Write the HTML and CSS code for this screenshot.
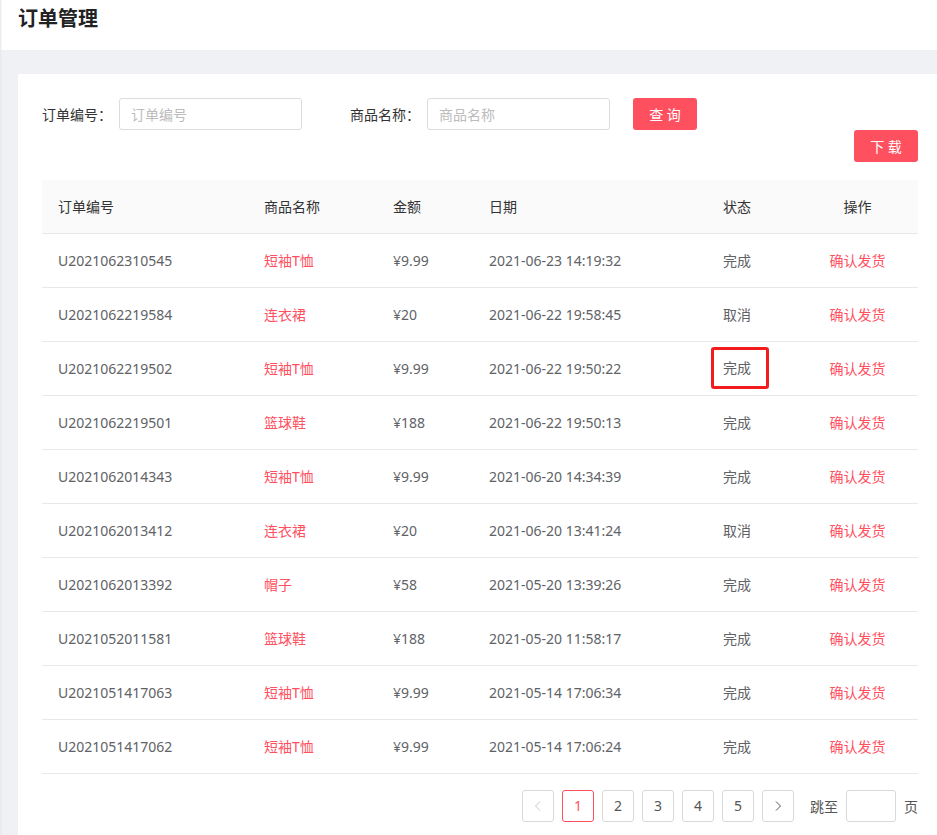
FILE: index.html
```html
<!DOCTYPE html>
<html lang="zh-CN">
<head>
  <meta charset="UTF-8">
  <meta name="viewport" content="width=device-width, initial-scale=1">
  <title>订单管理</title>
  <link rel="stylesheet" href="styles.css">
</head>
<body>

  <header class="page-header">
    <h1 class="page-title">订单管理</h1>
  </header>

  <main class="page-body">
    <section class="card">
      <form class="filter-bar">
        <label class="filter-item">
          <span class="filter-label">订单编号：</span>
          <input class="text-input" type="text" placeholder="订单编号">
        </label>
        <label class="filter-item">
          <span class="filter-label">商品名称：</span>
          <input class="text-input" type="text" placeholder="商品名称">
        </label>
        <button class="btn" type="button">查 询</button>
      </form>

      <div class="toolbar">
        <button class="btn" type="button">下 载</button>
      </div>

      <table class="order-table">
        <colgroup>
          <col class="col-no">
          <col class="col-name">
          <col class="col-price">
          <col class="col-date">
          <col class="col-status">
          <col class="col-action">
        </colgroup>
        <thead>
          <tr>
            <th>订单编号</th>
            <th>商品名称</th>
            <th>金额</th>
            <th>日期</th>
            <th class="center">状态</th>
            <th class="center">操作</th>
          </tr>
        </thead>
        <tbody>
          <tr>
            <td>U2021062310545</td><td class="red">短袖T恤</td><td>¥9.99</td>
            <td>2021-06-23 14:19:32</td><td class="center">完成</td><td class="center red">确认发货</td>
          </tr>
          <tr>
            <td>U2021062219584</td><td class="red">连衣裙</td><td>¥20</td>
            <td>2021-06-22 19:58:45</td><td class="center">取消</td><td class="center red">确认发货</td>
          </tr>
          <tr>
            <td>U2021062219502</td><td class="red">短袖T恤</td><td>¥9.99</td>
            <td>2021-06-22 19:50:22</td><td class="center"><span class="marked">完成</span></td><td class="center red">确认发货</td>
          </tr>
          <tr>
            <td>U2021062219501</td><td class="red">篮球鞋</td><td>¥188</td>
            <td>2021-06-22 19:50:13</td><td class="center">完成</td><td class="center red">确认发货</td>
          </tr>
          <tr>
            <td>U2021062014343</td><td class="red">短袖T恤</td><td>¥9.99</td>
            <td>2021-06-20 14:34:39</td><td class="center">完成</td><td class="center red">确认发货</td>
          </tr>
          <tr>
            <td>U2021062013412</td><td class="red">连衣裙</td><td>¥20</td>
            <td>2021-06-20 13:41:24</td><td class="center">取消</td><td class="center red">确认发货</td>
          </tr>
          <tr>
            <td>U2021062013392</td><td class="red">帽子</td><td>¥58</td>
            <td>2021-05-20 13:39:26</td><td class="center">完成</td><td class="center red">确认发货</td>
          </tr>
          <tr>
            <td>U2021052011581</td><td class="red">篮球鞋</td><td>¥188</td>
            <td>2021-05-20 11:58:17</td><td class="center">完成</td><td class="center red">确认发货</td>
          </tr>
          <tr>
            <td>U2021051417063</td><td class="red">短袖T恤</td><td>¥9.99</td>
            <td>2021-05-14 17:06:34</td><td class="center">完成</td><td class="center red">确认发货</td>
          </tr>
          <tr>
            <td>U2021051417062</td><td class="red">短袖T恤</td><td>¥9.99</td>
            <td>2021-05-14 17:06:24</td><td class="center">完成</td><td class="center red">确认发货</td>
          </tr>
        </tbody>
      </table>

      <nav class="pager">
        <button class="page-btn disabled" type="button">
          <svg width="12" height="12" viewBox="0 0 12 12"><path d="M8 1.5 3.5 6 8 10.5" fill="none" stroke="currentColor" stroke-width="1"/></svg>
        </button>
        <button class="page-btn active" type="button">1</button>
        <button class="page-btn" type="button">2</button>
        <button class="page-btn" type="button">3</button>
        <button class="page-btn" type="button">4</button>
        <button class="page-btn" type="button">5</button>
        <button class="page-btn" type="button">
          <svg width="12" height="12" viewBox="0 0 12 12"><path d="M4 1.5 8.5 6 4 10.5" fill="none" stroke="currentColor" stroke-width="1"/></svg>
        </button>
        <span class="jump-text">跳至</span>
        <input class="jump-input" type="text">
        <span class="jump-unit">页</span>
      </nav>
    </section>
  </main>

</body>
</html>
```

FILE: styles.css
```css
* {
  margin: 0;
  padding: 0;
  box-sizing: border-box;
}
body {
  background: #f0f1f5;
  color: #606266;
  font-family: "Noto Sans", "Noto Sans CJK SC", sans-serif;
  font-size: 14px;
  overflow: hidden;
}

.page-header {
  height: 50px;
  background: #fff;
  padding-left: 18px;
  display: flex;
  align-items: center;
  box-shadow: inset 2px 0 2px -1px #e6e6e6;
}
.page-title {
  font-size: 20px;
  font-weight: bold;
  color: #222;
  line-height: 1;
  margin-top: -12px;
}

.page-body {
  padding: 24px 0 0 18px;
  box-shadow: inset 2px 0 2px -1px #e6e6ea;
}
.card {
  background: #fff;
  padding: 24px 19px 30px 24px;
  min-height: 780px;
}

.filter-bar {
  display: flex;
  align-items: center;
  gap: 23px;
}
.filter-item {
  display: flex;
  align-items: center;
}
.filter-item + .filter-item {
  margin-left: 25px;
}
.filter-label {
  width: 77px;
  color: #333;
}
.text-input {
  width: 183px;
  height: 32px;
  border: 1px solid #dcdcdc;
  border-radius: 3px;
  padding: 0 11px;
  font: inherit;
  color: #333;
  outline: none;
}
.text-input::placeholder {
  color: #bcbcbc;
}

.btn {
  width: 64px;
  height: 32px;
  border: none;
  border-radius: 3px;
  background: #ff505f;
  color: #fff;
  font: inherit;
  cursor: pointer;
}

.toolbar {
  display: flex;
  justify-content: flex-end;
  margin-bottom: 18px;
}

.order-table {
  width: 100%;
  border-collapse: collapse;
  table-layout: fixed;
}
.col-no { width: 206px; }
.col-name { width: 129px; }
.col-price { width: 96px; }
.col-date { width: 204px; }
.col-status { width: 120px; }
.order-table th {
  height: 53px;
  background: #fafafa;
  font-weight: normal;
  color: #333;
  text-align: left;
  padding: 0 16px;
  border-bottom: 1px solid #e8e8e8;
}
.order-table td {
  height: 54px;
  padding: 0 16px;
  border-bottom: 1px solid #e8e8e8;
  color: #606266;
}
.order-table .center {
  text-align: center;
}
.order-table .red {
  color: #ff505f;
}
.marked {
  display: inline-block;
  margin-left: 6px;
  padding: 8px 15px 8px 9px;
  border: 3px solid #f21c1c;
  border-radius: 3px;
  line-height: 20px;
}

.pager {
  display: flex;
  justify-content: flex-end;
  align-items: center;
  gap: 8px;
  margin-top: 16px;
}
.page-btn {
  width: 32px;
  height: 32px;
  border: 1px solid #d9d9d9;
  border-radius: 3px;
  background: #fff;
  color: #555;
  font: inherit;
  display: flex;
  align-items: center;
  justify-content: center;
}
.page-btn.active {
  border-color: #ff505f;
  color: #ff505f;
}
.page-btn.disabled {
  color: #c8c8c8;
}
.jump-text {
  color: #555;
  margin-left: 8px;
}
.jump-unit {
  color: #555;
}
.jump-input {
  width: 50px;
  height: 32px;
  border: 1px solid #d9d9d9;
  border-radius: 3px;
  font: inherit;
  outline: none;
}
```
